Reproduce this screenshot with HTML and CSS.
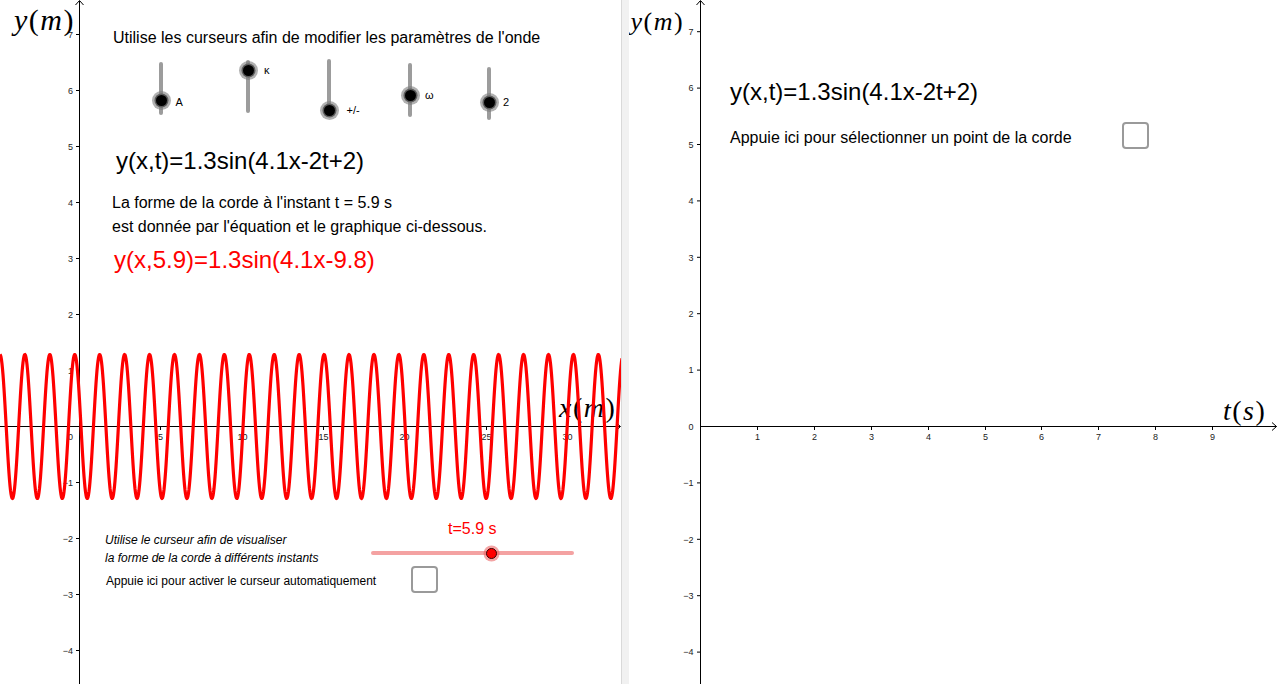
FILE: index.html
```html
<!DOCTYPE html>
<html lang="fr">
<head>
<meta charset="utf-8">
<title>Onde sur une corde</title>
<link rel="stylesheet" href="styles.css">
</head>
<body>
<div class="app">
  <section class="view view-left">
    <svg class="graph" width="621" height="684" viewBox="0 0 621 684">
      <g class="axis">
        <line x1="0" y1="426.5" x2="620" y2="426.5"/>
        <polyline class="arrow" points="616,422.5 620.5,426.5 616,430.5"/>
        <line x1="79.5" y1="684" x2="79.5" y2="1"/>
        <polyline class="arrow" points="75.5,5 79.5,0.5 83.5,5"/>
        <line x1="76" y1="34.5" x2="79.5" y2="34.5"/>
        <line x1="76" y1="90.5" x2="79.5" y2="90.5"/>
        <line x1="76" y1="146.5" x2="79.5" y2="146.5"/>
        <line x1="76" y1="202.5" x2="79.5" y2="202.5"/>
        <line x1="76" y1="258.5" x2="79.5" y2="258.5"/>
        <line x1="76" y1="314.5" x2="79.5" y2="314.5"/>
        <line x1="76" y1="370.5" x2="79.5" y2="370.5"/>
        <line x1="76" y1="482.5" x2="79.5" y2="482.5"/>
        <line x1="76" y1="538.5" x2="79.5" y2="538.5"/>
        <line x1="76" y1="594.5" x2="79.5" y2="594.5"/>
        <line x1="76" y1="650.5" x2="79.5" y2="650.5"/>
        <line x1="160.5" y1="426.5" x2="160.5" y2="430"/>
        <line x1="242.5" y1="426.5" x2="242.5" y2="430"/>
        <line x1="323.5" y1="426.5" x2="323.5" y2="430"/>
        <line x1="404.5" y1="426.5" x2="404.5" y2="430"/>
        <line x1="486.5" y1="426.5" x2="486.5" y2="430"/>
        <line x1="567.5" y1="426.5" x2="567.5" y2="430"/>
      </g>
      <g class="ticklbl ticklbl-y">
        <text x="73" y="37.7">7</text>
        <text x="73" y="93.7">6</text>
        <text x="73" y="149.7">5</text>
        <text x="73" y="205.7">4</text>
        <text x="73" y="261.7">3</text>
        <text x="73" y="317.7">2</text>
        <text x="73" y="373.7">1</text>
        <text x="73" y="485.7">−1</text>
        <text x="73" y="541.7">−2</text>
        <text x="73" y="597.7">−3</text>
        <text x="73" y="653.7">−4</text>
        <text x="73" y="439.5">0</text>
      </g>
      <g class="ticklbl ticklbl-x">
        <text x="160.5" y="439.5">5</text>
        <text x="242.5" y="439.5">10</text>
        <text x="323.5" y="439.5">15</text>
        <text x="404.5" y="439.5">20</text>
        <text x="486.5" y="439.5">25</text>
        <text x="567.5" y="439.5">30</text>
      </g>
      <text class="mathlbl mathlbl-lg" x="14" y="30"><tspan class="mi">y</tspan>(<tspan class="mi">m</tspan>)</text>
      <text class="mathlbl mathlbl-md" x="559" y="417"><tspan class="mi">x</tspan>(<tspan class="mi">m</tspan>)</text>
      <polyline id="wave" class="wave" points=""/>
    </svg>

    <p class="gtext t16 pos-title">Utilise les curseurs afin de modifier les paramètres de l'onde</p>

    <div class="vslider vs-a"><span class="knob" style="top:38.5px"></span></div>
    <span class="slabel sl-a">A</span>
    <div class="vslider vs-k"><span class="knob" style="top:10px"></span></div>
    <span class="slabel sl-k">κ</span>
    <div class="vslider vs-s"><span class="knob" style="top:51.2px"></span></div>
    <span class="slabel sl-s">+/-</span>
    <div class="vslider vs-w"><span class="knob" style="top:32.4px"></span></div>
    <span class="slabel sl-w">ω</span>
    <div class="vslider vs-p"><span class="knob" style="top:35.6px"></span></div>
    <span class="slabel sl-p">2</span>

    <p class="gtext t24 pos-eq">y(x,t)=1.3sin(4.1x-2t+2)</p>
    <p class="gtext t16 pos-p1">La forme de la corde à l'instant t = 5.9 s</p>
    <p class="gtext t16 pos-p2">est donnée par l'équation et le graphique ci-dessous.</p>
    <p class="gtext t24 red pos-eqred">y(x,5.9)=1.3sin(4.1x-9.8)</p>

    <p class="gtext t12 ital pos-c1">Utilise le curseur afin de visualiser</p>
    <p class="gtext t12 ital pos-c2">la forme de la corde à différents instants</p>
    <p class="gtext t12 pos-auto">Appuie ici pour activer le curseur automatiquement</p>
    <span class="check pos-check1"></span>

    <p class="gtext t16 red pos-tval">t=5.9 s</p>
    <div class="hslider"><span class="knob-red" style="left:120px"></span></div>
  </section>

  <div class="divider"></div>

  <section class="view view-right">
    <svg class="graph" width="651" height="684" viewBox="0 0 651 684">
      <g class="axis">
        <line x1="71.5" y1="426.5" x2="647.5" y2="426.5"/>
        <polyline class="arrow" points="643,422.5 647.5,426.5 643,430.5"/>
        <line x1="71.5" y1="684" x2="71.5" y2="1"/>
        <polyline class="arrow" points="67.5,5 71.5,0.5 75.5,5"/>
        <line x1="68" y1="31.7" x2="71.5" y2="31.7"/>
        <line x1="68" y1="88.1" x2="71.5" y2="88.1"/>
        <line x1="68" y1="144.5" x2="71.5" y2="144.5"/>
        <line x1="68" y1="200.9" x2="71.5" y2="200.9"/>
        <line x1="68" y1="257.3" x2="71.5" y2="257.3"/>
        <line x1="68" y1="313.7" x2="71.5" y2="313.7"/>
        <line x1="68" y1="370.1" x2="71.5" y2="370.1"/>
        <line x1="68" y1="482.9" x2="71.5" y2="482.9"/>
        <line x1="68" y1="539.3" x2="71.5" y2="539.3"/>
        <line x1="68" y1="595.7" x2="71.5" y2="595.7"/>
        <line x1="68" y1="652.1" x2="71.5" y2="652.1"/>
        <line x1="128.5" y1="426.5" x2="128.5" y2="430"/>
        <line x1="185.5" y1="426.5" x2="185.5" y2="430"/>
        <line x1="242.5" y1="426.5" x2="242.5" y2="430"/>
        <line x1="299.5" y1="426.5" x2="299.5" y2="430"/>
        <line x1="356.5" y1="426.5" x2="356.5" y2="430"/>
        <line x1="412.5" y1="426.5" x2="412.5" y2="430"/>
        <line x1="469.5" y1="426.5" x2="469.5" y2="430"/>
        <line x1="526.5" y1="426.5" x2="526.5" y2="430"/>
        <line x1="583.5" y1="426.5" x2="583.5" y2="430"/>
      </g>
      <g class="ticklbl ticklbl-y">
        <text x="64.5" y="34.9">7</text>
        <text x="64.5" y="91.3">6</text>
        <text x="64.5" y="147.7">5</text>
        <text x="64.5" y="204.1">4</text>
        <text x="64.5" y="260.5">3</text>
        <text x="64.5" y="316.9">2</text>
        <text x="64.5" y="373.3">1</text>
        <text x="64.5" y="430">0</text>
        <text x="64.5" y="486.1">−1</text>
        <text x="64.5" y="542.5">−2</text>
        <text x="64.5" y="598.9">−3</text>
        <text x="64.5" y="655.3">−4</text>
      </g>
      <g class="ticklbl ticklbl-x">
        <text x="128.5" y="440">1</text>
        <text x="185.5" y="440">2</text>
        <text x="242.5" y="440">3</text>
        <text x="299.5" y="440">4</text>
        <text x="356.5" y="440">5</text>
        <text x="412.5" y="440">6</text>
        <text x="469.5" y="440">7</text>
        <text x="526.5" y="440">8</text>
        <text x="583.5" y="440">9</text>
      </g>
      <text class="mathlbl mathlbl-sm" x="1.5" y="29.5"><tspan class="mi">y</tspan>(<tspan class="mi">m</tspan>)</text>
      <text class="mathlbl mathlbl-md" x="594" y="420"><tspan class="mi">t</tspan>(<tspan class="mi">s</tspan>)</text>
    </svg>

    <p class="gtext t24 pos-req">y(x,t)=1.3sin(4.1x-2t+2)</p>
    <p class="gtext t16 pos-rtext">Appuie ici pour sélectionner un point de la corde</p>
    <span class="check pos-check2"></span>
  </section>
</div>
<script src="script.js"></script>
</body>
</html>
```

FILE: styles.css
```css
* { box-sizing: border-box; }
html, body { margin: 0; padding: 0; }
body {
  width: 1280px;
  height: 684px;
  overflow: hidden;
  background: #fff;
  color: #000;
  font-family: "Liberation Sans", Arial, sans-serif;
}
.app { display: flex; width: 1280px; height: 684px; }
.view { position: relative; height: 684px; overflow: hidden; background: #fff; }
.view-left { width: 621px; flex: none; }
.view-right { flex: 1; }
.divider { width: 8px; flex: none; background: #f1f1f1; border-left: 1px solid #d9d9d9; }

.graph { position: absolute; left: 0; top: 0; display: block; }
.axis line, .axis polyline { stroke: #000; stroke-width: 1; fill: none; }
.ticklbl text { font-family: "Liberation Sans", Arial, sans-serif; font-size: 9px; fill: #222; }
.ticklbl-y text { text-anchor: end; }
.ticklbl-x text { text-anchor: middle; }
.mathlbl { font-family: "Liberation Serif", "Times New Roman", serif; fill: #000; letter-spacing: 1.5px; }
.mathlbl .mi { font-style: italic; }
.mathlbl-lg { font-size: 30px; }
.mathlbl-md { font-size: 28px; }
.mathlbl-sm { font-size: 26px; }
.wave { fill: none; stroke: #ff0000; stroke-width: 3.2; stroke-linejoin: round; }

.gtext { position: absolute; margin: 0; white-space: nowrap; line-height: 1; }
.t12 { font-size: 12px; }
.t16 { font-size: 16px; }
.t24 { font-size: 24px; }
.red { color: #ff0000; }
.ital { font-style: italic; }

.pos-title { left: 113px; top: 29.5px; }
.pos-eq { left: 116px; top: 149.2px; }
.pos-p1 { left: 112px; top: 194.8px; }
.pos-p2 { left: 112px; top: 219.2px; }
.pos-eqred { left: 114px; top: 248px; }
.pos-c1 { left: 105px; top: 534.1px; }
.pos-c2 { left: 105px; top: 551.5px; }
.pos-auto { left: 106px; top: 574.8px; }
.pos-tval { left: 448px; top: 520.8px; }
.pos-req { left: 101px; top: 79.7px; }
.pos-rtext { left: 101px; top: 130px; }

.check {
  position: absolute;
  width: 27px;
  height: 27px;
  border: 2px solid #9a9a9a;
  border-radius: 4px;
  background: #fff;
}
.pos-check1 { left: 410.5px; top: 565.5px; }
.pos-check2 { left: 492.5px; top: 122px; }

.vslider {
  position: absolute;
  width: 4px;
  border-radius: 2px;
  background: #9c9c9c;
}
.vs-a { left: 159.3px; top: 61.5px; height: 53.5px; }
.vs-k { left: 246.3px; top: 60px; height: 53px; }
.vs-s { left: 327.3px; top: 59.3px; height: 54px; }
.vs-w { left: 408.3px; top: 63.3px; height: 54px; }
.vs-p { left: 487.3px; top: 66.7px; height: 53.3px; }
.knob {
  position: absolute;
  left: 50%;
  width: 11px;
  height: 11px;
  margin: -5.5px 0 0 -5.5px;
  border-radius: 50%;
  background: #000;
  box-shadow: 0 0 0 1.5px #5c5c5c, 0 0 0 4px rgba(125, 125, 125, 0.6);
}
.slabel { position: absolute; font-size: 11px; line-height: 1; white-space: nowrap; }
.sl-a { left: 175.5px; top: 97.4px; }
.sl-k { left: 264px; top: 64.7px; }
.sl-s { left: 346.5px; top: 104.7px; }
.sl-w { left: 425px; top: 90px; }
.sl-p { left: 503px; top: 96.7px; }

.hslider {
  position: absolute;
  left: 371px;
  top: 551px;
  width: 203px;
  height: 4px;
  border-radius: 2px;
  background: #f4a2a2;
}
.knob-red {
  position: absolute;
  top: 50%;
  width: 11px;
  height: 11px;
  margin: -5.5px 0 0 -5.5px;
  border-radius: 50%;
  background: #ff0000;
  border: 1px solid #3a0000;
  box-shadow: 0 0 0 2.5px rgba(235, 90, 90, 0.55);
}
```

FILE: script.js
```js
(function () {
  var wave = document.getElementById('wave');
  if (!wave) return;
  var ox = 79.5, oy = 426.5, sx = 16.27, amp = 72;
  var pts = [];
  for (var px = 0; px <= 622; px += 0.5) {
    var x = (px - ox) / sx;
    var y = oy - amp * Math.sin(4.1 * x - 9.8);
    pts.push(px.toFixed(1) + ',' + y.toFixed(2));
  }
  wave.setAttribute('points', pts.join(' '));
})();
```
